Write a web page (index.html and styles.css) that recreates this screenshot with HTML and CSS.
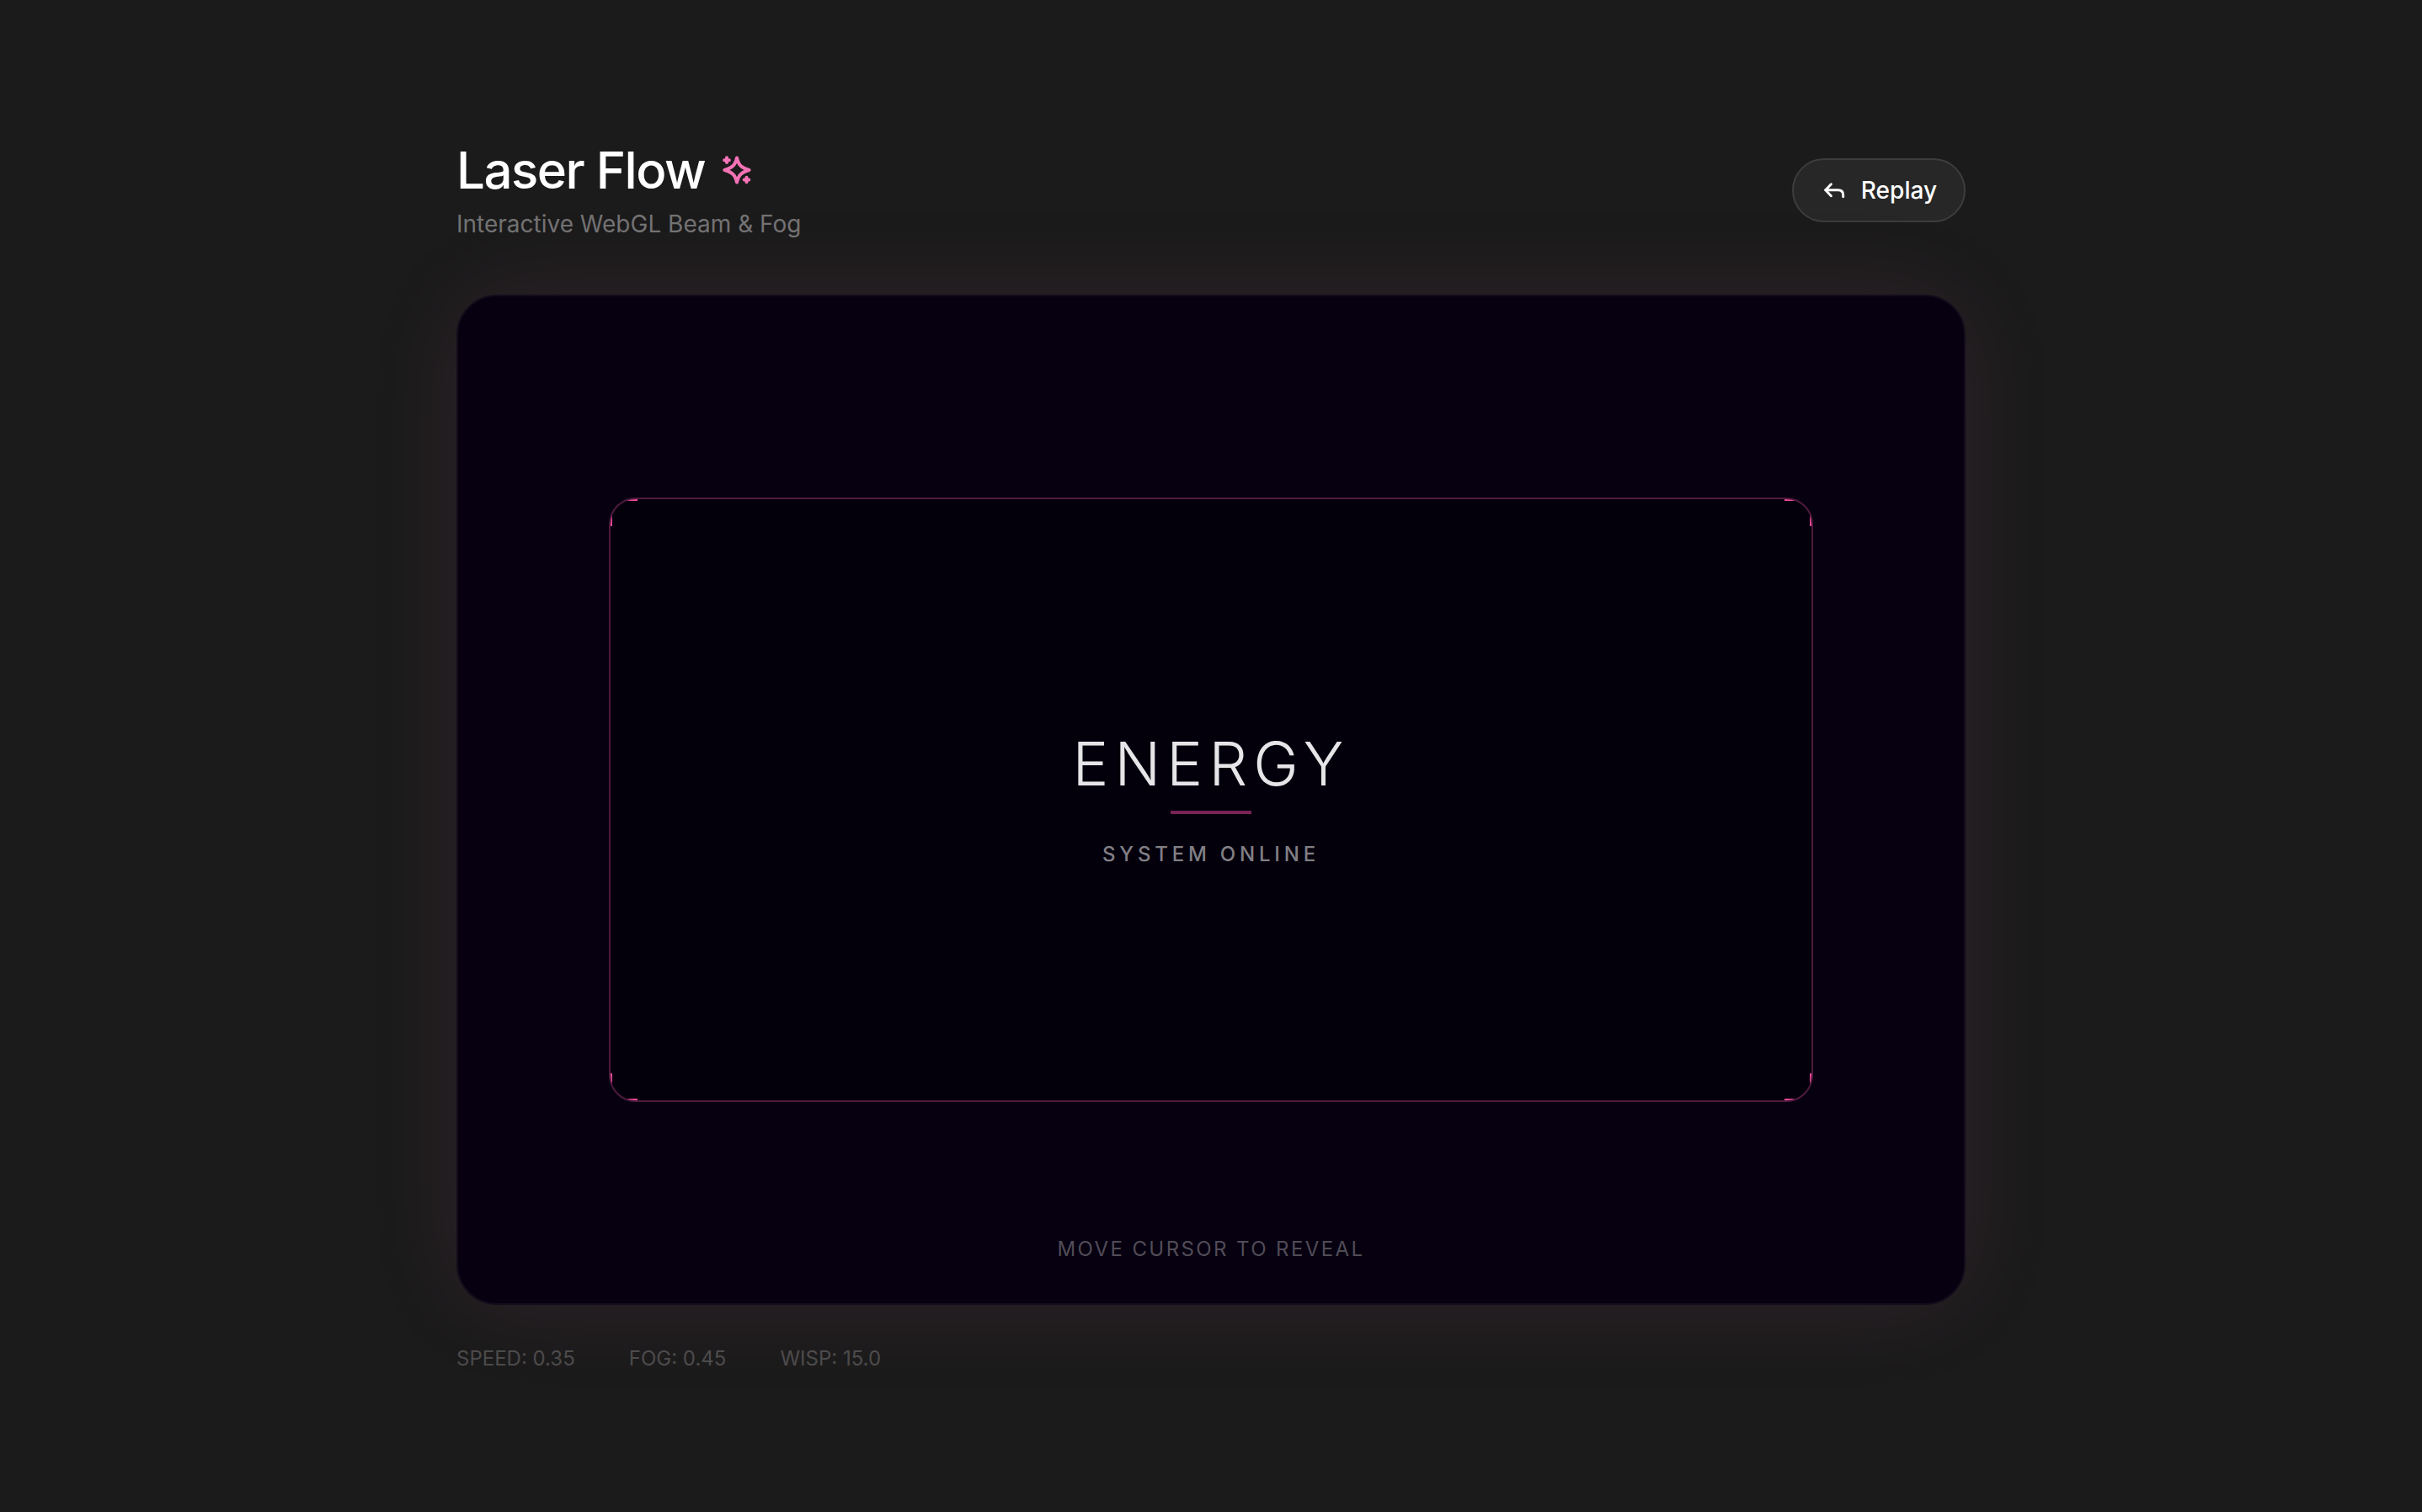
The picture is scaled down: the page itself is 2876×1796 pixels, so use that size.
FILE: index.html
```html
<!DOCTYPE html>
<html lang="en">
<head>
  <meta charset="UTF-8">
  <meta name="viewport" content="width=device-width, initial-scale=1">
  <title>Laser Flow</title>
  <link rel="stylesheet" href="styles.css">
</head>
<body>
  <main class="container">
    <header class="header">
      <div>
        <h1 class="title">
          Laser Flow
          <svg class="sparkles" viewBox="0 0 24 24" fill="none" stroke="currentColor" stroke-width="2.4" stroke-linecap="round" stroke-linejoin="round" aria-hidden="true">
            <path d="M12 3.3C13.2 8.2 14.6 10.2 20.8 12C14.6 13.8 13.2 15.8 12 20.7C10.8 15.8 9.4 13.8 3.2 12C9.4 10.2 10.8 8.2 12 3.3Z"/>
            <path d="M4.8 3.2V6.6M3.1 4.9H6.5M18.9 17.2V20.6M17.2 18.9H20.6"/>
          </svg>
        </h1>
        <p class="subtitle">Interactive WebGL Beam &amp; Fog</p>
      </div>
      <button class="replay" type="button">
        <svg class="replay-icon" viewBox="0 0 24 24" fill="none" stroke="currentColor" stroke-width="2.2" stroke-linecap="round" stroke-linejoin="round" aria-hidden="true">
          <path d="M9.3 6.6L4.3 11.8L9.3 17"/>
          <path d="M4.3 11.8H15.5C18.5 11.8 20 13.3 20 16.3V17.8"/>
        </svg>
        Replay
      </button>
    </header>

    <section class="stage">
      <div class="frame">
        <span class="corner top-left"></span>
        <span class="corner top-right"></span>
        <span class="corner bottom-left"></span>
        <span class="corner bottom-right"></span>
        <h2 class="energy">ENERGY</h2>
        <div class="line"></div>
        <p class="status">SYSTEM ONLINE</p>
      </div>
      <p class="hint">MOVE CURSOR TO REVEAL</p>
    </section>

    <footer class="stats">
      <span>SPEED: 0.35</span>
      <span>FOG: 0.45</span>
      <span>WISP: 15.0</span>
    </footer>
  </main>
</body>
</html>
```
FILE: styles.css
```css
* {
  box-sizing: border-box;
  margin: 0;
  padding: 0;
}
body {
  min-height: 100vh;
  display: flex;
  align-items: center;
  justify-content: center;
  background-color: #1b1b1b;
  color: #fff;
  font-family: Inter, "Liberation Sans", sans-serif;
}
.container {
  width: 100%;
  max-width: 1792px;
}
.header {
  display: flex;
  align-items: center;
  justify-content: space-between;
  margin-bottom: 64px;
}
.title {
  display: flex;
  align-items: center;
  gap: 18px;
  font-size: 60px;
  line-height: 72px;
  font-weight: 500;
  letter-spacing: -0.025em;
}
.sparkles {
  width: 40px;
  height: 40px;
  color: #f472b6;
}
.subtitle {
  margin-top: 8px;
  font-size: 28px;
  line-height: 40px;
  color: #737373;
}
.replay {
  display: flex;
  align-items: center;
  gap: 16px;
  padding: 16px 32px;
  border: 2px solid #3d3d3d;
  border-radius: 38px;
  background-color: #272727;
  color: #fff;
  font-family: inherit;
  font-size: 28px;
  line-height: 40px;
  font-weight: 500;
  cursor: pointer;
}
.replay-icon {
  width: 32px;
  height: 32px;
}
.stage {
  position: relative;
  display: flex;
  align-items: center;
  justify-content: center;
  height: 1200px;
  border: 2px solid #140c1b;
  border-radius: 48px;
  background-color: #060010;
  box-shadow: 0 0 120px rgba(255, 121, 198, 0.08);
}
.frame {
  position: relative;
  display: flex;
  flex-direction: column;
  align-items: center;
  justify-content: center;
  width: 80%;
  height: 60%;
  padding-bottom: 2px;
  border: 2px solid #4f1a3d;
  border-radius: 32px;
  background-color: #03000c;
  overflow: hidden;
}
.corner {
  position: absolute;
  width: 32px;
  height: 32px;
  border: 0 solid #ec4899;
}
.top-left {
  top: 0;
  left: 0;
  border-width: 2px 0 0 2px;
}
.top-right {
  top: 0;
  right: 0;
  border-width: 2px 2px 0 0;
}
.bottom-left {
  bottom: 0;
  left: 0;
  border-width: 0 0 2px 2px;
}
.bottom-right {
  bottom: 0;
  right: 0;
  border-width: 0 2px 2px 0;
}
.energy {
  font-size: 72px;
  line-height: 80px;
  font-weight: 300;
  letter-spacing: 0.1em;
  color: #e6e5e7;
}
.line {
  width: 96px;
  height: 4px;
  margin: 16px 0 32px;
  background-color: #782354;
}
.status {
  font-size: 24px;
  line-height: 32px;
  font-weight: 500;
  letter-spacing: 0.2em;
  color: #817f85;
}
.hint {
  position: absolute;
  bottom: 48px;
  left: 0;
  right: 0;
  text-align: center;
  font-size: 24px;
  line-height: 32px;
  letter-spacing: 0.1em;
  color: #514c57;
}
.stats {
  display: flex;
  gap: 64px;
  margin-top: 48px;
  font-size: 24px;
  line-height: 32px;
  color: #4b4b4b;
}
```
